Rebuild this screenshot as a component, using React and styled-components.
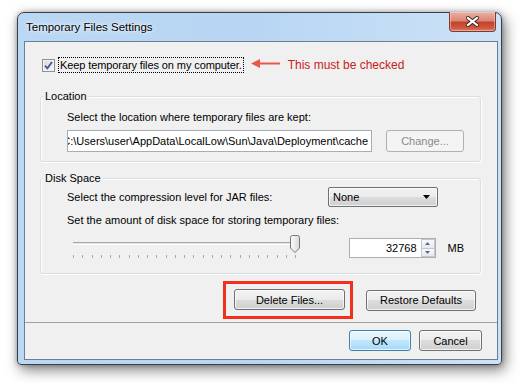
import React from 'react';
import styled, { createGlobalStyle } from 'styled-components';

const GlobalStyle = createGlobalStyle`
  html, body { margin: 0; padding: 0; background: #fff; }
  body {
    font-family: 'Liberation Sans', Arial, sans-serif;
    font-size: 11px;
    color: #000;
  }
`;

const Page = styled.div`
  width: 529px;
  height: 383px;
  padding: 12px 0 0 17px;
  box-sizing: border-box;
  overflow: hidden;
`;

const Window = styled.div`
  width: 485px;
  height: 353px;
  box-sizing: border-box;
  border: 1px solid #38414b;
  border-radius: 7px 7px 4px 4px;
  background: linear-gradient(90deg, #bad7f3 0%, #b8d6f3 50%, #cde2f7 100%);
  box-shadow: 3px 5px 14px rgba(0, 0, 0, 0.5), 0 0 5px rgba(0, 0, 0, 0.3);
  padding: 0 3px 4px 6px;
  display: flex;
  flex-direction: column;
`;

const TitleBar = styled.div`
  height: 28px;
  display: flex;
  align-items: flex-start;
  justify-content: space-between;
`;

const Title = styled.span`
  margin: 6px 0 0 2px;
  font-size: 11.5px;
  line-height: 16px;
  color: #000;
  text-shadow: 0 0 6px rgba(255, 255, 255, 0.9), 0 0 3px rgba(255, 255, 255, 0.9);
`;

const CloseButton = styled.div`
  width: 47px;
  height: 20px;
  box-sizing: border-box;
  margin: -1px 2px 0 0;
  border: 1px solid #7e3a30;
  border-top: none;
  border-radius: 0 0 4px 4px;
  background: linear-gradient(180deg, #eab1a6 0%, #dc8674 45%, #c4412b 55%, #cf5a43 85%, #dc826d 100%);
  box-shadow: inset 0 0 0 1px rgba(255, 220, 210, 0.45);
  display: flex;
  align-items: center;
  justify-content: center;
`;

const Client = styled.div`
  width: 474px;
  height: 319px;
  box-sizing: border-box;
  border: 1px solid #6d7e90;
  background: #f0f0f0;
  display: flex;
  flex-direction: column;
`;

const Body = styled.div`
  flex: 1;
  padding: 15px 16px 0 15px;
  display: flex;
  flex-direction: column;
`;

const CheckRow = styled.div`
  display: flex;
  align-items: center;
  height: 16px;
  margin-left: 2px;
`;

const CheckBox = styled.div`
  width: 13px;
  height: 13px;
  box-sizing: border-box;
  border: 1px solid #8e8f8f;
  background: linear-gradient(135deg, #dadada 0%, #f6f6f6 100%);
  box-shadow: inset 0 0 0 1px #f4f4f4;
  display: flex;
  align-items: center;
  justify-content: center;
`;

const FocusLabel = styled.span`
  margin-left: 3px;
  border: 1px dotted #000;
  padding: 0 1px;
  line-height: 14px;
  white-space: nowrap;
  letter-spacing: -0.1px;
`;

const Note = styled.div`
  display: flex;
  align-items: center;
  margin-left: 7px;
`;

const NoteText = styled.span`
  margin-left: 8px;
  font-size: 12px;
  color: #c8201c;
  white-space: nowrap;
`;

const Group = styled.div`
  position: relative;
  margin-top: ${p => p.$top}px;
  border: 1px solid #d5dfe5;
  border-radius: 3px;
  box-shadow: inset 1px 1px 0 #fff, 1px 1px 0 #fff;
  padding: ${p => p.$pad};
`;

const Legend = styled.span`
  position: absolute;
  top: -8px;
  left: 2px;
  padding: 0 2px;
  background: #f0f0f0;
  line-height: 14px;
`;

const Label = styled.div`
  line-height: 16px;
  white-space: nowrap;
  margin-top: ${p => p.$top || 0}px;
  margin-bottom: ${p => p.$bottom || 0}px;
  width: ${p => (p.$width ? `${p.$width}px` : 'auto')};
`;

const Row = styled.div`
  display: flex;
  align-items: center;
  gap: ${p => p.$gap || 0}px;
`;

const PathField = styled.div`
  width: 305px;
  height: 22px;
  box-sizing: border-box;
  border: 1px solid #a6adb6;
  background: #fff;
  display: flex;
  align-items: center;
  justify-content: flex-end;
  padding-right: 3px;
  overflow: hidden;
  white-space: nowrap;
`;

const Button = styled.div`
  width: ${p => p.$w}px;
  height: ${p => p.$h || 21}px;
  box-sizing: border-box;
  border: 1px solid ${p => (p.$disabled ? '#adb2b5' : p.$default ? '#3c7fb1' : '#707070')};
  border-radius: 3px;
  background: ${p =>
    p.$disabled
      ? '#f4f4f4'
      : p.$default
      ? 'linear-gradient(180deg, #eaf6fd 0%, #d9f0fc 50%, #bee6fd 50%, #a7d9f5 100%)'
      : 'linear-gradient(180deg, #f2f2f2 0%, #ebebeb 50%, #dddddd 50%, #cfcfcf 100%)'};
  box-shadow: inset 0 0 0 1px ${p => (p.$disabled ? '#f4f4f4' : 'rgba(255, 255, 255, 0.7)')};
  color: ${p => (p.$disabled ? '#8a8a8a' : '#000')};
  display: flex;
  align-items: center;
  justify-content: center;
  white-space: nowrap;
`;

const Combo = styled.div`
  width: 110px;
  height: 20px;
  box-sizing: border-box;
  border: 1px solid #707070;
  border-radius: 2px;
  background: linear-gradient(180deg, #f2f2f2 0%, #ebebeb 50%, #dddddd 50%, #cfcfcf 100%);
  box-shadow: inset 0 0 0 1px rgba(255, 255, 255, 0.7);
  display: flex;
  align-items: center;
  justify-content: space-between;
  padding: 0 7px 0 4px;
`;

const SliderRow = styled.div`
  display: flex;
  align-items: flex-start;
  margin-top: 7px;
  padding-left: 6px;
`;

const Slider = styled.div`
  position: relative;
  width: 227px;
  height: 23px;
`;

const Track = styled.div`
  width: 224px;
  height: 3px;
  margin-top: 7px;
  box-sizing: border-box;
  border-top: 1px solid #a7a7a7;
  border-bottom: 1px solid #fff;
  background: #e3e3e3;
`;

const Thumb = styled.svg`
  position: absolute;
  left: 217px;
  top: 0;
`;

const Ticks = styled.div`
  width: 223px;
  height: 3px;
  margin-top: 10px;
  display: flex;
  justify-content: space-between;
`;

const Tick = styled.span`
  width: 1px;
  height: 3px;
  background: #a9a9a9;
`;

const Spinner = styled.div`
  width: 87px;
  height: 20px;
  margin: 3px 0 0 51px;
  box-sizing: border-box;
  border: 1px solid #abadb3;
  background: #fff;
  display: flex;
`;

const SpinValue = styled.div`
  flex: 1;
  text-align: right;
  line-height: 18px;
  padding-right: 4px;
`;

const SpinButtons = styled.div`
  width: 14px;
  display: flex;
  flex-direction: column;
`;

const SpinButton = styled.div`
  flex: 1;
  box-sizing: border-box;
  border: 1px solid #c3c8cf;
  ${p => (p.$down ? 'border-top: none;' : '')}
  background: linear-gradient(180deg, #f7f8f9 0%, #e6e9ec 100%);
  display: flex;
  align-items: center;
  justify-content: center;
`;

const Unit = styled.span`
  margin: 3px 0 0 12px;
  line-height: 20px;
`;

const ButtonRow = styled.div`
  display: flex;
  align-items: center;
  justify-content: flex-end;
  gap: 13px;
  margin: 7px 5px 0 0;
`;

const Highlight = styled.div`
  border: 3px solid #f2301b;
  padding: 5px 5px 6px 8px;
`;

const Footer = styled.div`
  border-top: 1px solid #a0a0a0;
  padding: 7px 15px 8px 0;
  display: flex;
  justify-content: flex-end;
  gap: 8px;
`;

const Triangle = ({ down, color }) => (
  <svg width="5" height="3" viewBox="0 0 5 3">
    <path d={down ? 'M0 0 H5 L2.5 3 Z' : 'M0 3 H5 L2.5 0 Z'} fill={color} />
  </svg>
);

const App = () => {
  const ticks = Array.from({ length: 25 }, (_, i) => i);
  return (
    <>
      <GlobalStyle />
      <Page>
        <Window>
          <TitleBar>
            <Title>Temporary Files Settings</Title>
            <CloseButton>
              <svg width="13" height="11" viewBox="0 0 13 11">
                <path d="M2 2 L11 9 M11 2 L2 9" stroke="#3b2320" strokeWidth="4" strokeLinecap="square" />
                <path d="M2 2 L11 9 M11 2 L2 9" stroke="#fff" strokeWidth="2.2" strokeLinecap="square" />
              </svg>
            </CloseButton>
          </TitleBar>
          <Client>
            <Body>
              <CheckRow>
                <CheckBox>
                  <svg width="9" height="9" viewBox="0 0 9 9">
                    <path d="M1 4.6 L3.4 7.4 L8 1" fill="none" stroke="#42579a" strokeWidth="1.8" />
                  </svg>
                </CheckBox>
                <FocusLabel>Keep temporary files on my computer.</FocusLabel>
                <Note>
                  <svg width="29" height="11" viewBox="0 0 29 11" style={{ marginBottom: 3 }}>
                    <path d="M0 5.5 L9 1 L9 4.5 L29 4.5 L29 6.5 L9 6.5 L9 10 Z" fill="#ea5747" />
                  </svg>
                  <NoteText>This must be checked</NoteText>
                </Note>
              </CheckRow>

              <Group $top={23} $pad="12px 16px 9px 26px">
                <Legend>Location</Legend>
                <Label $bottom={5}>Select the location where temporary files are kept:</Label>
                <Row $gap={14}>
                  <PathField>C:\Users\user\AppData\LocalLow\Sun\Java\Deployment\cache</PathField>
                  <Button $w={78} $h={22} $disabled>Change...</Button>
                </Row>
              </Group>

              <Group $top={16} $pad="8px 16px 15px 26px">
                <Legend>Disk Space</Legend>
                <Row>
                  <Label $width={261}>Select the compression level for JAR files:</Label>
                  <Combo>
                    <span>None</span>
                    <svg width="7" height="4" viewBox="0 0 7 4">
                      <path d="M0 0 H7 L3.5 4 Z" fill="#000" />
                    </svg>
                  </Combo>
                </Row>
                <Label $top={5}>Set the amount of disk space for storing temporary files:</Label>
                <SliderRow>
                  <Slider>
                    <Track />
                    <Thumb width="10" height="18" viewBox="0 0 10 18">
                      <defs>
                        <linearGradient id="thumbFill" x1="0" y1="0" x2="1" y2="0">
                          <stop offset="0" stopColor="#fbfbfb" />
                          <stop offset="1" stopColor="#d9d9d9" />
                        </linearGradient>
                      </defs>
                      <path
                        d="M0.5 2.5 Q0.5 0.5 2.5 0.5 L7.5 0.5 Q9.5 0.5 9.5 2.5 L9.5 13 L5 17.5 L0.5 13 Z"
                        fill="url(#thumbFill)"
                        stroke="#767676"
                      />
                    </Thumb>
                    <Ticks>
                      {ticks.map(t => (
                        <Tick key={t} />
                      ))}
                    </Ticks>
                  </Slider>
                  <Spinner>
                    <SpinValue>32768</SpinValue>
                    <SpinButtons>
                      <SpinButton>
                        <Triangle color="#4d6c99" />
                      </SpinButton>
                      <SpinButton $down>
                        <Triangle down color="#4d6c99" />
                      </SpinButton>
                    </SpinButtons>
                  </Spinner>
                  <Unit>MB</Unit>
                </SliderRow>
              </Group>

              <ButtonRow>
                <Highlight>
                  <Button $w={111}>Delete Files...</Button>
                </Highlight>
                <Button $w={110}>Restore Defaults</Button>
              </ButtonRow>
            </Body>
            <Footer>
              <Button $w={62} $default>OK</Button>
              <Button $w={63}>Cancel</Button>
            </Footer>
          </Client>
        </Window>
      </Page>
    </>
  );
};

export default App;
